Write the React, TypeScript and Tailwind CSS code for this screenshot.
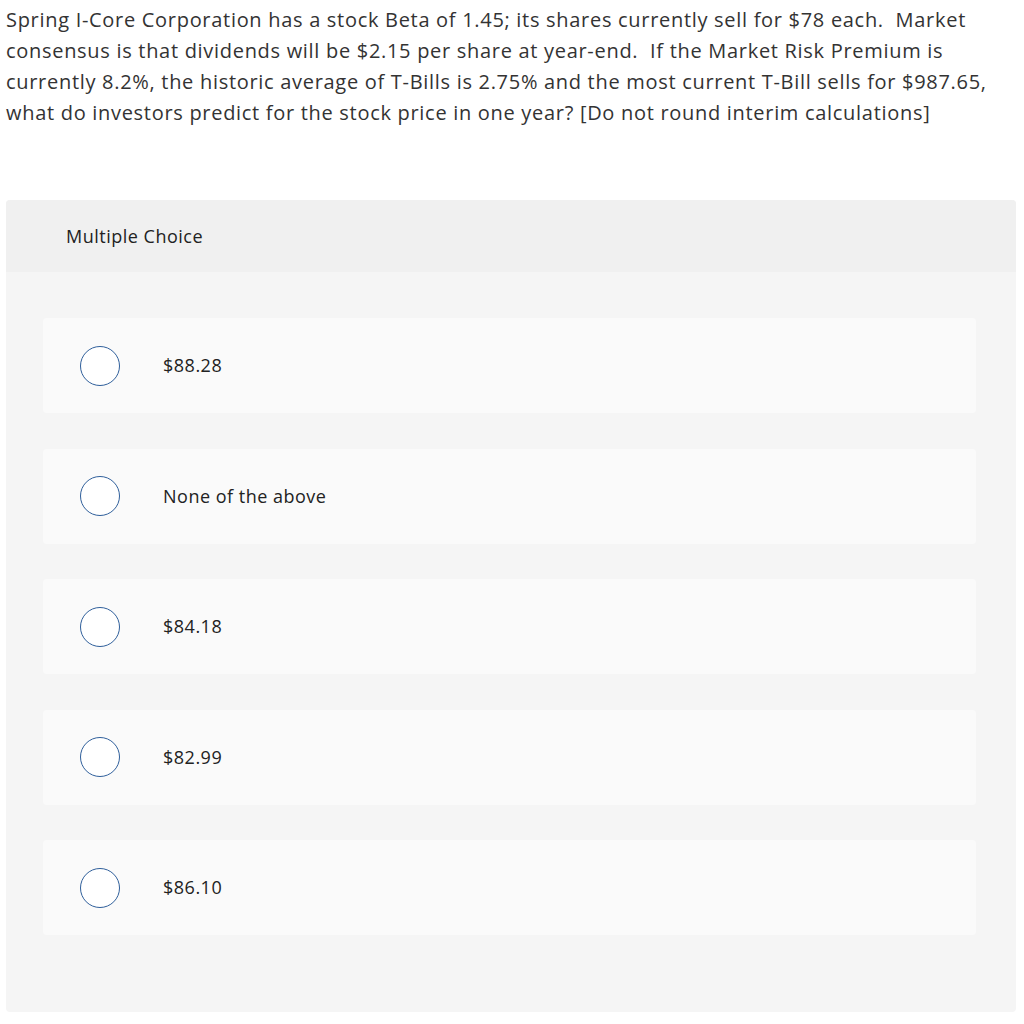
const options = ['$88.28', 'None of the above', '$84.18', '$82.99', '$86.10']

const lines = [
  'Spring I-Core Corporation has a stock Beta of 1.45; its shares currently sell for $78 each.\u00a0 Market',
  'consensus is that dividends will be $2.15 per share at year-end.\u00a0 If the Market Risk Premium is',
  'currently 8.2%, the historic average of T-Bills is 2.75% and the most current T-Bill sells for $987.65,',
  'what do investors predict for the stock price in one year? [Do not round interim calculations]',
]

export default function App() {
  return (
    <div className="min-h-screen bg-white pt-[4px]" style={{ fontFamily: '"Open Sans", Lato, sans-serif' }}>
      {/* Question */}
      <div className="mx-[6px] text-[20px] leading-[31px] tracking-[0.7px] text-[#333]">
        {lines.map((l) => (
          <div key={l} className="whitespace-nowrap">{l}</div>
        ))}
      </div>

      {/* Multiple choice panel */}
      <div className="mx-[6px] mt-[72px] w-[1010px] overflow-hidden rounded-[4px] bg-[#f5f5f5]">
        <div className="flex h-[72px] items-center bg-[#f0f0f0] pl-[60px] text-[18px] tracking-[0.5px] text-[#222]">
          Multiple Choice
        </div>
        <div className="flex flex-col gap-[35.5px] pb-[77px] pl-[37px] pr-[40px] pt-[46px]">
          {options.map((o) => (
            <div key={o} className="flex h-[95px] items-center rounded-[4px] bg-[#fafafa] pl-[37px]">
              <span className="h-[40px] w-[40px] rounded-full border-[1.75px] border-[#2f5f9b] bg-white" />
              <span className="ml-[43px] text-[18px] tracking-[0.5px] text-[#222]">{o}</span>
            </div>
          ))}
        </div>
      </div>
    </div>
  )
}
